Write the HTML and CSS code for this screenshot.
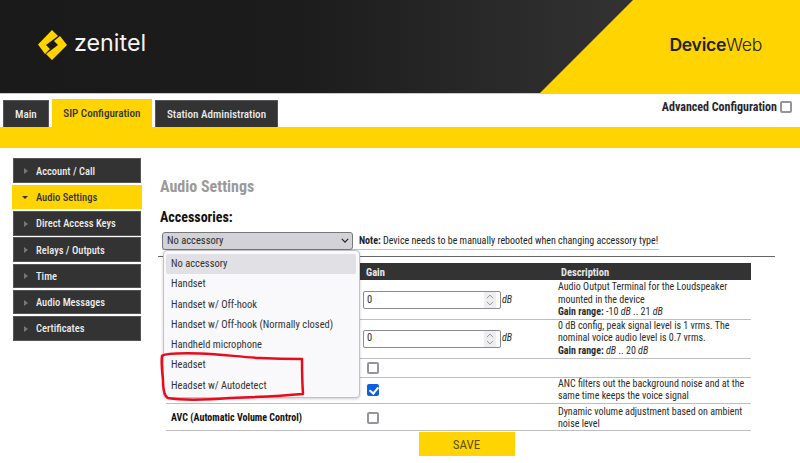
FILE: index.html
```html
<!DOCTYPE html>
<html lang="en">
<head>
<meta charset="utf-8">
<title>Zenitel DeviceWeb</title>
<link rel="stylesheet" href="styles.css">
</head>
<body>
<header class="banner">
  <div class="brand">
    <svg class="logo" viewBox="0 0 30 30" width="30" height="30" aria-hidden="true">
      <path fill="#ffd400" d="M0 14.500 L14 0 L20 6 L8 15 L12 19 L7 24 Z"/>
      <path fill="#ffd400" d="M29 15 L14 30 L8 24 L20 15 L16 11 L22 6 Z"/>
    </svg>
    <span class="wordmark">zenitel</span>
  </div>
  <div class="product"><b>Device</b>Web</div>
</header>
<nav class="tabbar">
  <div class="tabs">
    <a class="tab">Main</a>
    <a class="tab tab-active">SIP Configuration</a>
    <a class="tab">Station Administration</a>
  </div>
  <label class="advanced">Advanced Configuration <input type="checkbox" class="check"></label>
</nav>
<div class="strip"></div>
<div class="page">
  <aside class="side">
    <a class="side-item"><i class="arrow"></i>Account / Call</a>
    <a class="side-item side-active"><i class="arrow-down"></i>Audio Settings</a>
    <a class="side-item"><i class="arrow"></i>Direct Access Keys</a>
    <a class="side-item"><i class="arrow"></i>Relays / Outputs</a>
    <a class="side-item"><i class="arrow"></i>Time</a>
    <a class="side-item"><i class="arrow"></i>Audio Messages</a>
    <a class="side-item"><i class="arrow"></i>Certificates</a>
  </aside>
  <main class="content">
    <h1 class="title">Audio Settings</h1>
    <h2 class="subtitle">Accessories:</h2>
    <div class="acc-row">
      <div class="select">No accessory
        <svg class="chev" viewBox="0 0 10 6" width="8" height="5" aria-hidden="true"><path d="M1 1l4 4 4-4" fill="none" stroke="#222" stroke-width="1.5"/></svg>
      </div>
      <p class="note"><b>Note:</b> Device needs to be manually rebooted when changing accessory type!</p>
    </div>
    <div class="rule"></div>
    <table class="grid">
      <colgroup><col class="c1"><col class="c2"><col class="c3"></colgroup>
      <thead><tr><th></th><th>Gain</th><th>Description</th></tr></thead>
      <tbody>
        <tr class="r-tall r-first"><td></td>
          <td><div class="gain"><div class="num"><span>0</span><svg class="spin" viewBox="0 0 14 18" width="14" height="18" aria-hidden="true"><rect width="14" height="18" fill="#eeeef0"/><path d="M3.500 7l3.500-3.500 3.500 3.500M3.500 11l3.500 3.500 3.500-3.500" fill="none" stroke="#8a8a8e" stroke-width="1"/></svg></div><em>dB</em></div></td>
          <td>Audio Output Terminal for the Loudspeaker mounted in the device<br><b>Gain range:</b> -10 <em>dB</em> .. 21 <em>dB</em></td></tr>
        <tr class="r-tall"><td></td>
          <td><div class="gain"><div class="num"><span>0</span><svg class="spin" viewBox="0 0 14 18" width="14" height="18" aria-hidden="true"><rect width="14" height="18" fill="#eeeef0"/><path d="M3.500 7l3.500-3.500 3.500 3.500M3.500 11l3.500 3.500 3.500-3.500" fill="none" stroke="#8a8a8e" stroke-width="1"/></svg></div><em>dB</em></div></td>
          <td>0 dB config, peak signal level is 1 vrms. The nominal voice audio level is 0.7 vrms.<br><b>Gain range:</b> <em>dB</em> .. 20 <em>dB</em></td></tr>
        <tr class="r-short"><td></td><td class="cell-check"><input type="checkbox" class="check"></td><td></td></tr>
        <tr class="r-mid"><td></td><td class="cell-check"><input type="checkbox" class="check" checked></td><td>ANC filters out the background noise and at the same time keeps the voice signal</td></tr>
        <tr class="r-mid r-last"><td class="label">AVC (Automatic Volume Control)</td><td class="cell-check"><input type="checkbox" class="check"></td><td>Dynamic volume adjustment based on ambient noise level</td></tr>
      </tbody>
    </table>
    <div class="actions"><button class="save" type="button">SAVE</button></div>
    <ul class="dropdown">
      <li class="opt opt-on">No accessory</li>
      <li class="opt">Handset</li>
      <li class="opt">Handset w/ Off-hook</li>
      <li class="opt">Handset w/ Off-hook (Normally closed)</li>
      <li class="opt">Handheld microphone</li>
      <li class="opt">Headset</li>
      <li class="opt">Headset w/ Autodetect</li>
    </ul>
  </main>
</div>
<svg class="scribble" viewBox="0 0 150 55" width="150" height="55" aria-hidden="true">
  <path d="M2 6 C5 3 20 3 40 3.500 C60 4 80 7 100 8 C120 9 135 9 142 9 C142 20 142 30 143 44 C120 46 100 47 70 48 C45 50 20 50 8 48 C4 46 3 40 3 30 C2 20 1 12 2 6 Z" fill="none" stroke="#ea0a1a" stroke-width="2.500" stroke-linejoin="round"/>
</svg>
</body>
</html>
```
FILE: styles.css
```css
* { box-sizing: border-box; }
html, body { margin: 0; padding: 0; }
body { position: relative; width: 800px; height: 463px; overflow: hidden; background: #fff; font-family: Roboto, "Liberation Sans", sans-serif; font-stretch: 87%; color: #2b2b2b; font-size: 11px; }
.banner { position: relative; height: 94px; padding-bottom: 4px; border-bottom: 1px solid #c9c9cc; background: linear-gradient(90deg, #1a1a1a 0, #1c1c1c 300px, #333 640px); display: flex; justify-content: space-between; align-items: center; overflow: hidden; }
.banner::after { content: ""; position: absolute; inset: 0; background: #ffd400; clip-path: polygon(633px 0, 800px 0, 800px 100%, 540px 100%); }
.brand { position: relative; z-index: 1; display: flex; align-items: center; gap: 6px; margin-left: 38px; }
.logo { display: block; }
.wordmark { font-family: Inter, sans-serif; font-stretch: normal; color: #f4f4f4; font-size: 23.300px; line-height: 30px; margin-top: -3px; }
.product { position: relative; z-index: 1; margin-right: 38px; font-family: Inter, sans-serif; font-stretch: normal; font-size: 17.600px; color: #222; letter-spacing: -.3px; font-weight: 300; }
.product b { font-weight: 600; }
.tabbar { display: flex; justify-content: space-between; height: 33px; padding: 4px 8px 0 3px; }
.tabs { display: flex; gap: 3px; align-items: flex-end; }
.tab { display: flex; align-items: center; height: 27px; padding: 0 11px; background: #333; border: 1px solid #55555c; border-bottom: 0; color: #ececec; font-size: 11.100px; font-weight: 500; }
.tab-active { background: #ffd400; border-color: #ffd400; color: #333; height: 28px; padding: 0 10.500px; }
.advanced { display: flex; align-items: center; gap: 3px; height: 17px; font-size: 12px; font-weight: 700; color: #26262e; }
.check { appearance: none; position: relative; margin: 0; width: 12px; height: 12px; display: block; background: #fff; border: 2px solid #9494a0; border-radius: 2px; }
.check:checked { background: #0b5fe0; border-color: #0b5fe0; }
.check:checked::after { content: ""; position: absolute; left: 2px; top: -1px; width: 4px; height: 7px; border: solid #fff; border-width: 0 2px 2px 0; transform: rotate(40deg); }
.strip { height: 21px; background: #ffd400; }
.page { display: flex; padding: 10px 0 0 13px; }
.side { width: 128px; display: flex; flex-direction: column; gap: 1.600px; margin-right: 19px; padding-top: .4px; }
.side-item { display: flex; align-items: center; height: 24.700px; background: #333; color: #ededed; font-size: 10.500px; font-weight: 500; padding: 1px 0 0 10px; border: 1px solid #555; }
.side-active { background: #ffd400; border-color: #ffd400; color: #333; margin: 0 -1px; padding-left: 8px; }
.arrow { width: 0; height: 0; border-left: 4px solid #777; border-top: 3px solid transparent; border-bottom: 3px solid transparent; margin-right: 8px; }
.arrow-down { width: 0; height: 0; border-top: 3px solid #333; border-left: 3px solid transparent; border-right: 3px solid transparent; margin: 0 8px 0 1px; }
.content { position: relative; width: 640px; }
.title { margin: 19px 0 0; font-size: 16px; line-height: 19px; font-weight: 700; color: #9a9a9a; }
.subtitle { margin: 13px 0 0; font-size: 14px; line-height: 17px; font-weight: 700; color: #111; }
.acc-row { display: flex; align-items: center; gap: 6px; margin: 6px 0 0 2px; width: 497px; height: 18px; border-bottom: 1px solid #c4c4c8; }
.select { position: relative; width: 191px; height: 18px; flex: none; background: #d2d2d7; border: 1px solid #77777d; border-radius: 3px; color: #2b2b2b; font-size: 10.500px; line-height: 16px; padding-left: 4px; }
.chev { position: absolute; right: 3px; top: 5px; }
.note { margin: 0; font-size: 10px; color: #222; white-space: nowrap; }
.rule { height: 1px; background: #666; width: 617px; margin: 6px 0 0 -2px; }
.grid { border-collapse: collapse; table-layout: fixed; width: 585px; margin: 6px 0 0 6px; }
.c1 { width: 194px; }
.c2 { width: 195px; }
th { height: 17px; background: #333; color: #e8e8e8; font-size: 10.500px; font-weight: 700; text-align: left; padding: 1px 5px 0 6px; }
td { border-bottom: 1px solid #bdbdc2; padding: 0 5px 0 3px; font-size: 10px; line-height: 12.200px; color: #2b2b2b; vertical-align: middle; }
td:first-child { padding-left: 5px; }
.cell-check { padding-left: 7px; }
.r-tall td { height: 39px; }
.r-first td { padding-top: 1px; }
.r-short td { height: 19px; }
.r-mid td { height: 26.500px; }
.r-last td { padding-top: 2px; }
.label { font-weight: 700; color: #111; }
.gain { display: flex; align-items: center; gap: 1.500px; }
.gain em { font-size: 10px; }
.num { display: flex; align-items: center; justify-content: space-between; width: 137.500px; height: 18px; border: 1px solid #8a8a90; border-radius: 2px; padding: 0 3px; background: #fff; font-size: 10.500px; }
.spin { display: block; height: 16px; }
.actions { display: flex; justify-content: center; margin: 1px 0 0 -13px; width: 639px; }
.save { width: 96px; height: 24px; background: #ffd400; border: 0; color: #5a5010; font-family: inherit; font-stretch: inherit; font-size: 13px; }
.dropdown { position: absolute; left: 3px; top: 92px; width: 197px; height: 148px; margin: 0; padding: 3px 3px 3px 2px; list-style: none; background: #f9f9fc; border: 1px solid #c2c2c6; border-radius: 4px; box-shadow: 0 1px 3px rgba(0,0,0,.2); }
.opt { height: 20.300px; line-height: 20px; padding-left: 5px; font-size: 10.500px; color: #333; }
.opt-on { background: #e0e0e5; border-radius: 2px; }
.scribble { position: absolute; left: 160px; top: 350px; }
```
